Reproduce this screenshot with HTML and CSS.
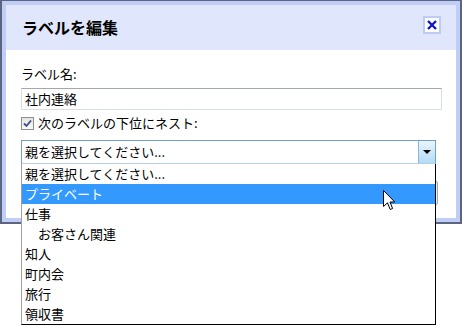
FILE: index.html
```html
<!DOCTYPE html>
<html lang="ja">
<head>
    <meta charset="UTF-8">
    <meta name="viewport" content="width=device-width, initial-scale=1.0">
    <title>ラベルを編集</title>
    <link rel="stylesheet" href="styles.css">
</head>
<body>
    <div class="dialog">
        <div class="dialog-header">
            <h1 class="dialog-title">ラベルを編集</h1>
            <button class="close-btn" title="閉じる">
                <svg width="14" height="14" viewBox="0 0 14 14">
                    <path d="M3 3 L11 11 M11 3 L3 11" stroke="#1414c8" stroke-width="2.4" fill="none"/>
                </svg>
            </button>
        </div>
        <div class="dialog-body">
            <div class="field-label">ラベル名:</div>
            <div class="text-input">社内連絡</div>
            <label class="nest-row">
                <span class="checkbox">
                    <svg width="11" height="11" viewBox="0 0 11 11">
                        <path d="M2 5.5 L4.5 8 L9 2.5" stroke="#3a4f8a" stroke-width="1.8" fill="none"/>
                    </svg>
                </span>
                次のラベルの下位にネスト:
            </label>
            <div class="select-box">
                <span class="select-value">親を選択してください...</span>
                <span class="select-arrow"></span>
            </div>
        </div>
    </div>

    <div class="list-edge"></div>
    <ul class="dropdown-list">
        <li>親を選択してください...</li>
        <li class="selected">プライベート</li>
        <li>仕事</li>
        <li class="child">お客さん関連</li>
        <li>知人</li>
        <li>町内会</li>
        <li>旅行</li>
        <li>領収書</li>
    </ul>

    <svg class="cursor" width="13" height="21" viewBox="0 0 13 21">
        <path d="M0.5 0.5 V16.5 L4.5 12.8 L7.2 19.5 L9.6 18.5 L7 12 H11.8 Z" fill="#fff" stroke="#000" stroke-width="1"/>
    </svg>
</body>
</html>
```

FILE: styles.css
```css
body {
    margin: 0;
    background-color: #fff;
    font-family: "Noto Sans CJK JP", "Noto Sans", sans-serif;
    font-size: 13px;
    color: #000;
}
.dialog {
    width: 462px;
    box-sizing: border-box;
    border: 1px solid #5b6480;
    border-left-width: 2px;
    border-right-width: 2px;
    border-bottom-width: 2px;
    padding: 4px;
    background-color: #bfcdf7;
    box-shadow: 0 3px 0 #9599a4;
}
.dialog-header {
    height: 45px;
    box-sizing: border-box;
    padding: 11px 15px 0 16px;
    background-color: #e0e7fd;
    display: flex;
    justify-content: space-between;
    align-items: flex-start;
}
.dialog-title {
    margin: 1px 0 0;
    font-size: 16px;
    line-height: 20px;
    font-weight: bold;
}
.close-btn {
    width: 18px;
    height: 18px;
    padding: 0;
    border: 2px solid #bccbf7;
    background-color: #fff;
    display: flex;
    align-items: center;
    justify-content: center;
    cursor: pointer;
}
.dialog-body {
    height: 168px;
    box-sizing: border-box;
    padding: 16px 14px 0 15px;
    background-color: #fff;
}
.field-label {
    line-height: 16px;
    margin-bottom: 6px;
}
.text-input {
    height: 22px;
    box-sizing: border-box;
    border: 1px solid #d9dee6;
    border-top-color: #a3a8b0;
    padding-left: 3px;
    line-height: 20px;
}
.nest-row {
    display: flex;
    align-items: center;
    margin-top: 5px;
    height: 16px;
    line-height: 16px;
}
.checkbox {
    width: 13px;
    height: 13px;
    box-sizing: border-box;
    border: 1px solid #8e8f8f;
    background: linear-gradient(#e4e4e4, #fafafa);
    margin-right: 4px;
    display: flex;
    align-items: center;
    justify-content: center;
}
.select-box {
    margin-top: 9px;
    width: 415px;
    height: 24px;
    box-sizing: border-box;
    border: 1px solid #6f9fcb;
    border-bottom-color: #b7cde0;
    display: flex;
    align-items: center;
    justify-content: space-between;
    padding-left: 3px;
}
.select-value {
    line-height: 20px;
}
.select-arrow {
    width: 17px;
    height: 22px;
    box-sizing: border-box;
    border-left: 1px solid #8bb5da;
    background: linear-gradient(#e9f5fd, #b3dcf6);
    position: relative;
}
.select-arrow::after {
    content: "";
    position: absolute;
    left: 4px;
    top: 9px;
    border-left: 4px solid transparent;
    border-right: 4px solid transparent;
    border-top: 4px solid #000;
}
.dropdown-list {
    position: absolute;
    left: 21px;
    top: 164px;
    width: 415px;
    box-sizing: border-box;
    margin: 0;
    padding: 0;
    list-style: none;
    background-color: #fff;
    border-left: 1px solid #a0a0a0;
    border-right: 1px solid #000;
    border-bottom: 1px solid #000;
}
.dropdown-list li {
    height: 20px;
    line-height: 20px;
    padding-left: 3px;
}
.dropdown-list li.child {
    padding-left: 16px;
}
.dropdown-list li.selected {
    background-color: #3399ff;
    color: #fff;
}
.list-edge {
    position: absolute;
    left: 431px;
    top: 181px;
    width: 7px;
    height: 24px;
    box-sizing: border-box;
    border: 1px solid #a6a6a6;
    border-radius: 2px;
    background-color: #f0f0f0;
}
.cursor {
    position: absolute;
    left: 383px;
    top: 190px;
}
```
